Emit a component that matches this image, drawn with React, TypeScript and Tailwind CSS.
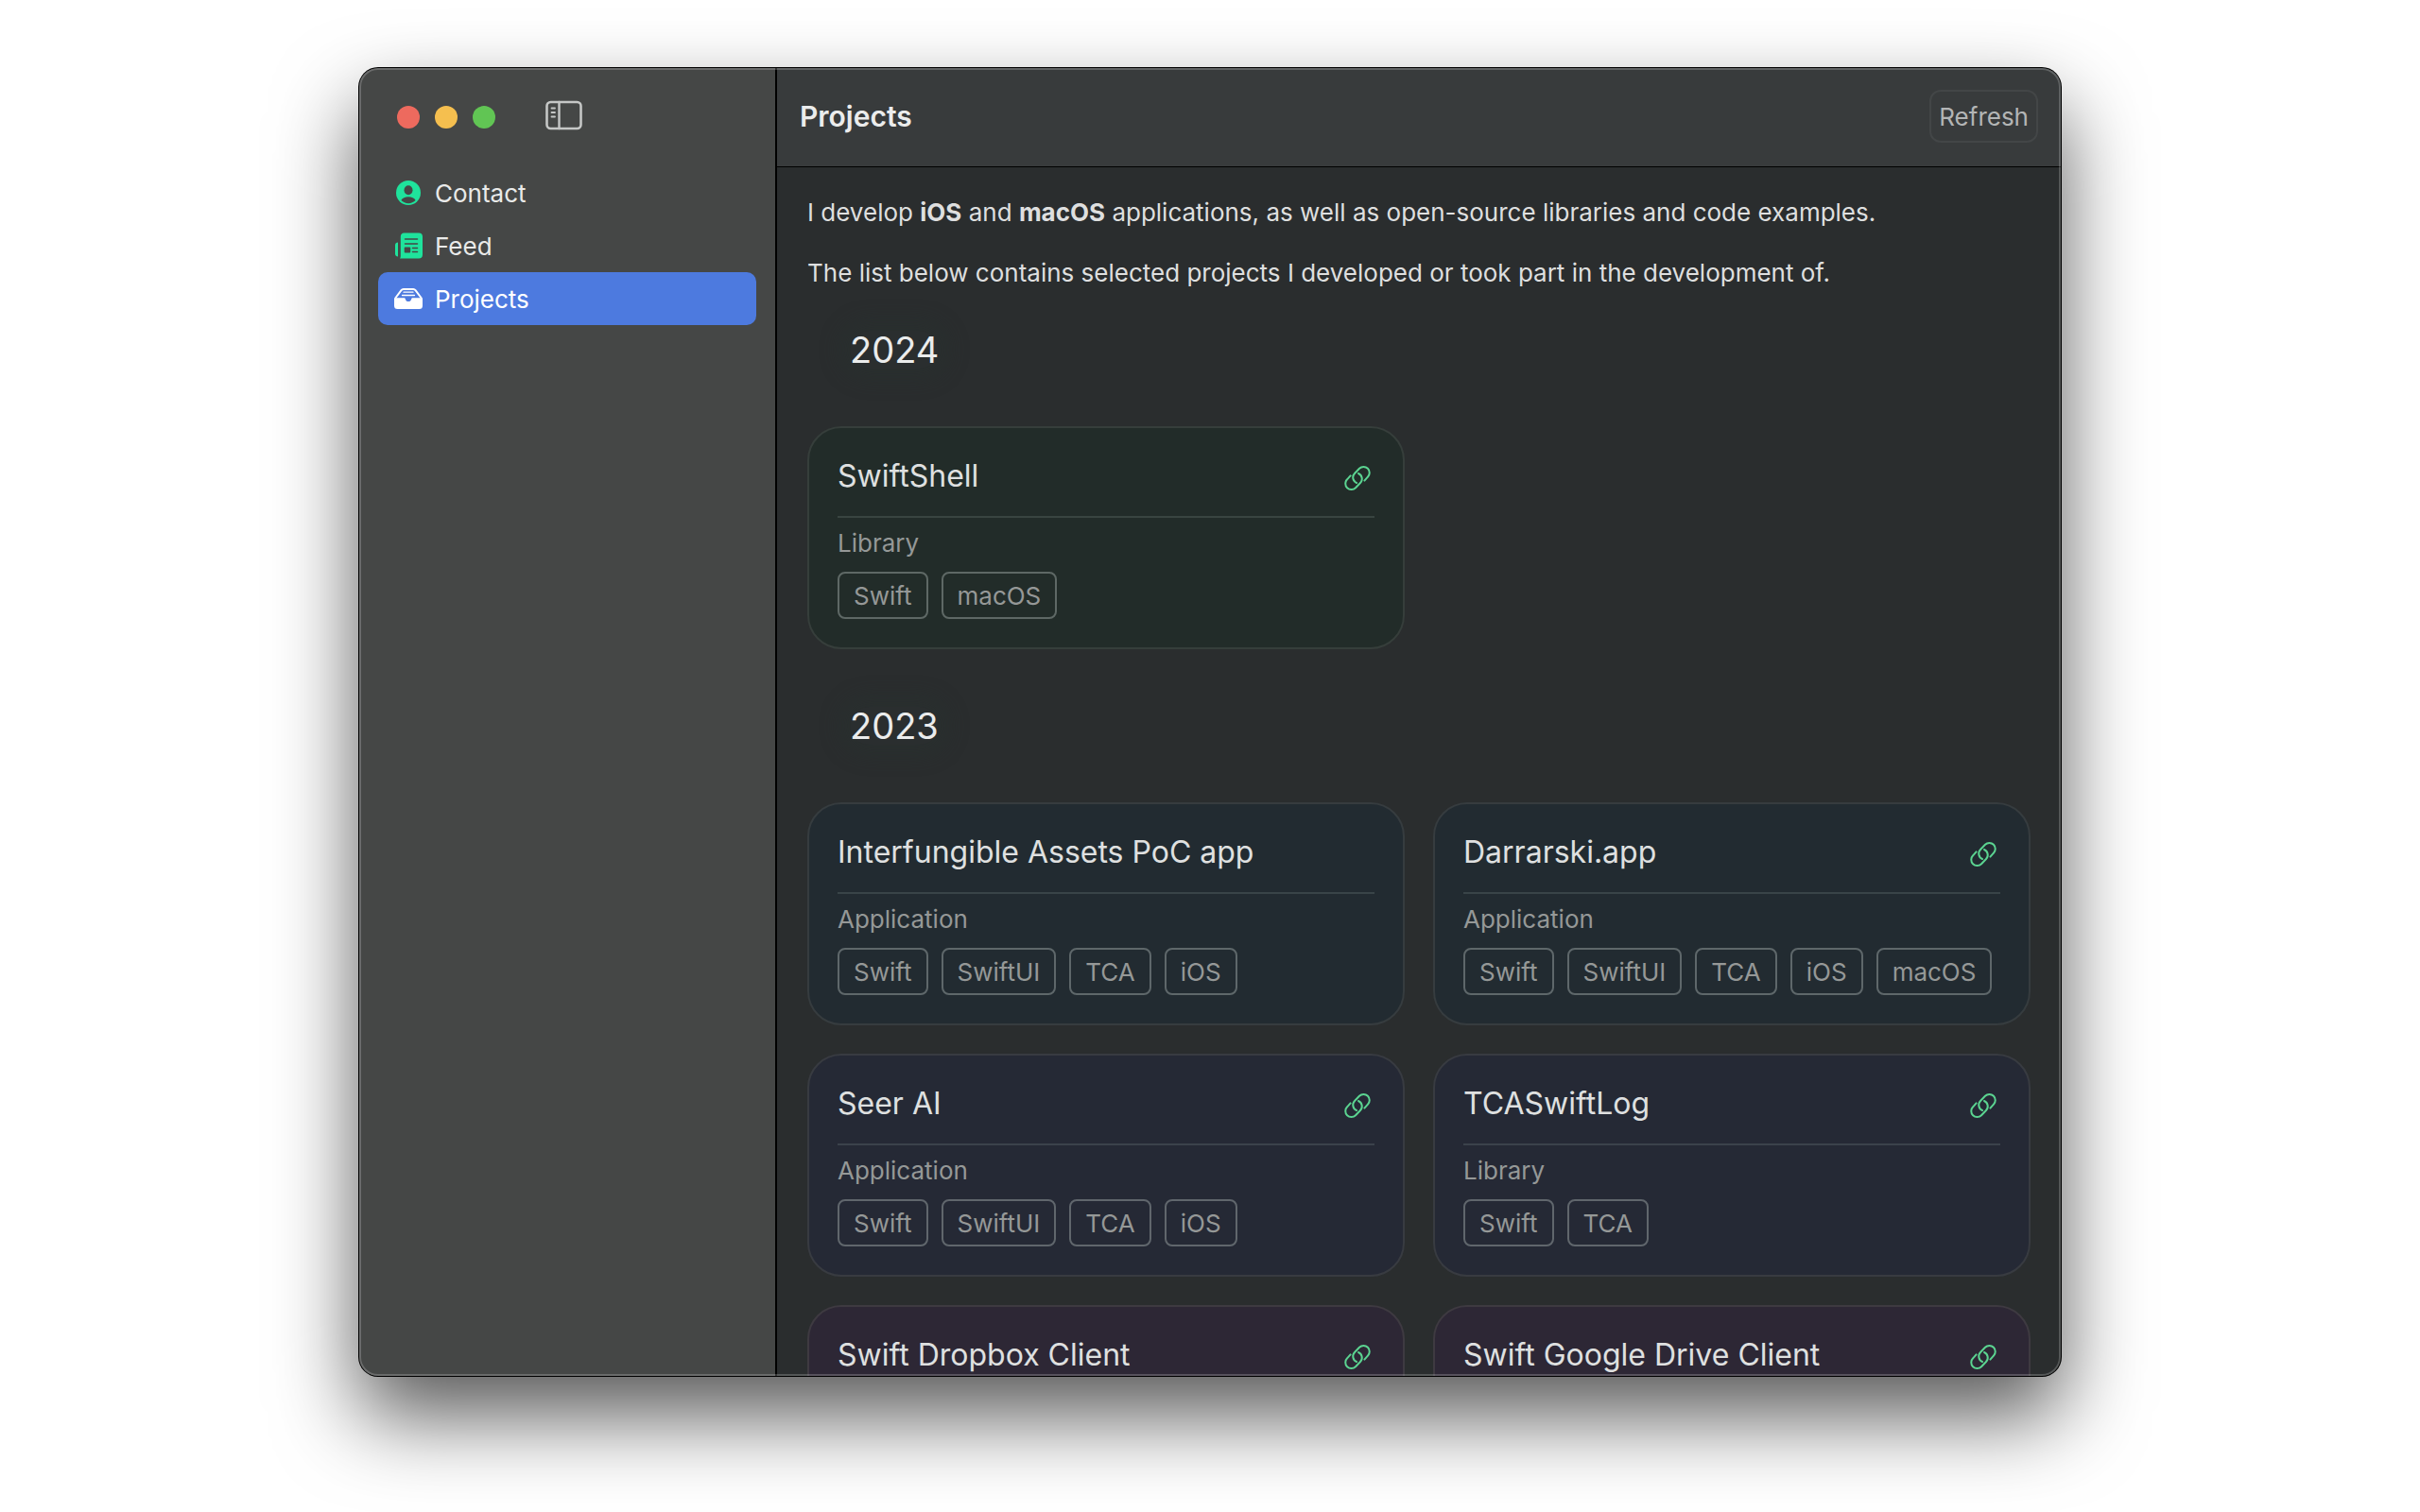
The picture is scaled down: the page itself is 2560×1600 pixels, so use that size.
import React from "react";

type Tint = "green" | "blue" | "indigo" | "purple";
type Project = { name: string; kind?: string; tags?: string[]; link: boolean; tint: Tint };

const tints: Record<Tint, string> = {
  green: "bg-[#222c29] border-[#363e3b]",
  blue: "bg-[#222b31] border-[#363c3f]",
  indigo: "bg-[#252935] border-[#383b41]",
  purple: "bg-[#2d2735] border-[#3e3a41]",
};

const sections: { year: string; projects: Project[] }[] = [
  {
    year: "2024",
    projects: [{ name: "SwiftShell", kind: "Library", tags: ["Swift", "macOS"], link: true, tint: "green" }],
  },
  {
    year: "2023",
    projects: [
      { name: "Interfungible Assets PoC app", kind: "Application", tags: ["Swift", "SwiftUI", "TCA", "iOS"], link: false, tint: "blue" },
      { name: "Darrarski.app", kind: "Application", tags: ["Swift", "SwiftUI", "TCA", "iOS", "macOS"], link: true, tint: "blue" },
      { name: "Seer AI", kind: "Application", tags: ["Swift", "SwiftUI", "TCA", "iOS"], link: true, tint: "indigo" },
      { name: "TCASwiftLog", kind: "Library", tags: ["Swift", "TCA"], link: true, tint: "indigo" },
      { name: "Swift Dropbox Client", link: true, tint: "purple" },
      { name: "Swift Google Drive Client", link: true, tint: "purple" },
    ],
  },
];

function SidebarIcon() {
  return (
    <svg width="40" height="32" viewBox="0 0 40 32" fill="none" stroke="#c5c7c6" strokeLinecap="round">
      <rect x="1.5" y="2" width="36" height="28" rx="4" strokeWidth="2.6" />
      <path d="M14.5 2v28" strokeWidth="2.4" />
      <path d="M6.500 8.500h3.500M6.500 13h3.500M6.500 17.500h3.500" strokeWidth="1.8" />
    </svg>
  );
}

function ContactIcon() {
  return (
    <svg width="32" height="32" viewBox="0 0 32 32">
      <circle cx="16" cy="16" r="13" fill="#1fe39c" />
      <ellipse cx="16" cy="13.2" rx="4.5" ry="5" fill="#454746" />
      <path d="M8.4 24c1.200-2.600 4.200-3.800 7.600-3.800s6.400 1.200 7.600 3.800c-2 2-4.700 3.200-7.600 3.200s-5.600-1.200-7.600-3.200z" fill="#454746" />
    </svg>
  );
}

function FeedIcon() {
  return (
    <svg width="32" height="32" viewBox="0 0 32 32" fill="none">
      <path d="M5 12.600v15c-1.800 0-3-1.200-3-3v-9c0-1.800 1.200-3 3-3z" fill="#1fe39c" />
      <path d="M11.500 2.500h15.500a4 4 0 0 1 4 4v19a4 4 0 0 1-4 4h-20c.6-.6.8-1.500.8-2.500V6.500a4 4 0 0 1 3.700-4z" fill="#1fe39c" />
      <path d="M12.500 9h13M12.500 14h13M20.500 18.500h5M20.500 22.500h5" stroke="#454746" strokeWidth="1.500" strokeLinecap="round" />
      <rect x="11.700" y="17.500" width="6.500" height="6" rx="1" fill="#454746" />
    </svg>
  );
}

function TrayIcon() {
  return (
    <svg width="32" height="32" viewBox="0 0 32 32" fill="none">
      <path d="M2.200 15.500 8.500 7.200a3 3 0 0 1 2.300-1.200h10.400a3 3 0 0 1 2.300 1.200l6.300 8.300" stroke="#fff" strokeWidth="2" strokeLinejoin="round" />
      <path d="M11 9.200h10M9.500 12.500h13" stroke="#fff" strokeWidth="1.300" strokeLinecap="round" />
      <path d="M1 15.200h10.500c.8 0 1.100.5 1.300 1.200.4 1.600 1.600 2.600 3.200 2.600s2.800-1 3.200-2.600c.2-.7.5-1.200 1.300-1.200H31v8.300a3.500 3.500 0 0 1-3.500 3.500h-23A3.500 3.500 0 0 1 1 23.500z" fill="#fff" />
    </svg>
  );
}

function LinkIcon() {
  return (
    <svg width="30" height="30" viewBox="0 0 30 30" fill="none" stroke="#5bd491" strokeWidth="2" strokeLinecap="round">
      <path d="M7.600 12.400 4.100 16.300a6.200 6.200 0 0 0 8.900 8.900l5-5.200a6.200 6.200 0 0 0-2-10" />
      <path d="M22.400 17.600 25.900 13.700a6.200 6.200 0 0 0-8.900-8.900l-5 5.200a6.200 6.200 0 0 0 2 10" />
    </svg>
  );
}

function NavItem({ icon, label, active = false }: { icon: React.ReactNode; label: string; active?: boolean }) {
  return (
    <a
      href={"#" + label.toLowerCase()}
      aria-current={active ? "page" : undefined}
      className={
        active
          ? "flex h-14 items-center gap-3 rounded-[10px] bg-[#4d7adf] px-4 text-white"
          : "flex h-14 items-center gap-3 rounded-[10px] px-4 text-[#e9eae9]"
      }
    >
      {icon}
      <span>{label}</span>
    </a>
  );
}

function Card({ project }: { project: Project }) {
  return (
    <article className={"rounded-[36px] border-2 p-[30px] " + tints[project.tint]}>
      <div className="flex items-center justify-between border-b-2 border-[#98aaa733] pb-[21px]">
        <h3 className="text-[32px] leading-[42px] text-[#dfe0e0]">{project.name}</h3>
        {project.link && (
          <a href="#link" aria-label={"Open " + project.name} className="mt-1 mr-[3px]">
            <LinkIcon />
          </a>
        )}
      </div>
      {project.kind && <p className="pt-[11px] leading-8 text-[#959897]">{project.kind}</p>}
      {project.tags && (
        <ul className="mt-3.5 flex gap-3.5 text-[#959897]">
          {project.tags.map((tag) => (
            <li key={tag} className="flex h-[50px] items-center rounded-lg border-2 border-[#b9c3c166] px-[15px]">
              {tag}
            </li>
          ))}
        </ul>
      )}
    </article>
  );
}

export default function App() {
  return (
    <div className="h-screen overflow-hidden bg-white px-[380px] pt-[72px] pb-[144px] font-['Inter',sans-serif] text-[26px]">
      <div className="relative flex h-full overflow-hidden rounded-[20px] bg-[#2a2d2e] shadow-[0_0_0_1px_#000,0_42px_88px_rgba(0,0,0,0.66)]">
        <aside className="w-[442px] shrink-0 border-r-2 border-black bg-[#454746]">
          <div className="flex h-[104px] items-center pl-10">
            <div className="flex gap-4">
              <button aria-label="Close" className="size-6 rounded-full bg-[#ed6a5e]" />
              <button aria-label="Minimize" className="size-6 rounded-full bg-[#f5bf4f]" />
              <button aria-label="Zoom" className="size-6 rounded-full bg-[#61c554]" />
            </div>
            <button aria-label="Toggle sidebar" className="ml-[53px] pb-1">
              <SidebarIcon />
            </button>
          </div>
          <nav className="px-5">
            <NavItem icon={<ContactIcon />} label="Contact" />
            <NavItem icon={<FeedIcon />} label="Feed" />
            <NavItem icon={<TrayIcon />} label="Projects" active />
          </nav>
        </aside>

        <main className="flex min-w-0 flex-1 flex-col">
          <header className="flex h-[105px] shrink-0 items-center justify-between border-b border-black bg-[#383b3c] px-6 pb-0.5">
            <h1 className="text-[30px] font-semibold text-[#ebecec]">Projects</h1>
            <button className="h-14 rounded-xl border-2 border-[#434647] px-2 text-[#b3b5b5]">Refresh</button>
          </header>
          <div className="min-h-0 flex-1 overflow-hidden px-8 pt-8">
            <div className="flex flex-col gap-8 leading-8 text-[#dedfdf]">
              <p>
                I develop <strong>iOS</strong> and <strong>macOS</strong> applications, as well as open-source libraries and code examples.
              </p>
              <p>The list below contains selected projects I developed or took part in the development of.</p>
            </div>
            {sections.map((section) => (
              <section key={section.year} className="pb-4">
                <h2 className="flex h-[146px] items-center pb-4 pl-[45px] text-[38px] text-[#ebecec]">
                  <span className="rounded-full bg-[#29302f]/50 leading-10 shadow-[0_0_20px_12px_rgba(41,50,48,0.4)]">{section.year}</span>
                </h2>
                <div className="grid auto-rows-[236px] grid-cols-2 gap-[30px]">
                  {section.projects.map((project) => (
                    <Card key={project.name} project={project} />
                  ))}
                </div>
              </section>
            ))}
          </div>
        </main>
        <div className="pointer-events-none absolute inset-0 rounded-[20px] border-2 border-white/20" />
      </div>
    </div>
  );
}
